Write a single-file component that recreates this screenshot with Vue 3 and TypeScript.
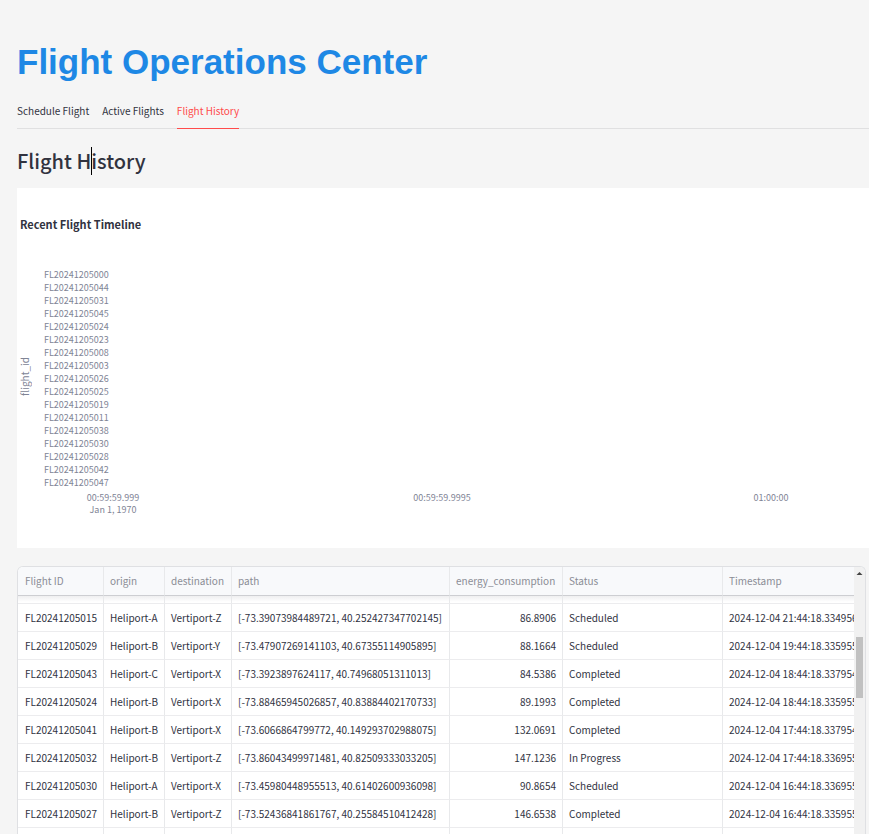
<script setup lang="ts">
import { ref } from 'vue'

interface FlightRow {
  id: string
  origin: string
  destination: string
  path: string
  energy: string
  status: string
  timestamp: string
}

const tabs: string[] = ['Schedule Flight', 'Active Flights', 'Flight History']
const activeTab = ref('Flight History')

const flightTicks: string[] = [
  '000', '044', '031', '045', '024', '023', '008', '003', '026',
  '025', '019', '011', '038', '030', '028', '042', '047',
].map((n) => `FL20241205${n}`)

const timeTicks: string[][] = [
  ['00:59:59.999', 'Jan 1, 1970'],
  ['00:59:59.9995'],
  ['01:00:00'],
]

const row = (
  id: string, origin: string, destination: string, path: string,
  energy: string, status: string, time: string,
): FlightRow => ({
  id: `FL20241205${id}`,
  origin: `Heliport-${origin}`,
  destination: `Vertiport-${destination}`,
  path: `[${path}]`,
  energy,
  status,
  timestamp: `2024-12-04 ${time}`,
})

const rows: FlightRow[] = [
  row('015', 'A', 'Z', '-73.39073984489721, 40.252427347702145', '86.8906', 'Scheduled', '21:44:18.334956'),
  row('029', 'B', 'Y', '-73.47907269141103, 40.67355114905895', '88.1664', 'Scheduled', '19:44:18.335955'),
  row('043', 'C', 'X', '-73.3923897624117, 40.74968051311013', '84.5386', 'Completed', '18:44:18.337954'),
  row('024', 'B', 'X', '-73.88465945026857, 40.83884402170733', '89.1993', 'Completed', '18:44:18.335955'),
  row('041', 'B', 'X', '-73.6066864799772, 40.149293702988075', '132.0691', 'Completed', '17:44:18.337954'),
  row('032', 'B', 'Z', '-73.86043499971481, 40.82509333033205', '147.1236', 'In Progress', '17:44:18.336955'),
  row('030', 'A', 'X', '-73.45980448955513, 40.61402600936098', '90.8654', 'Scheduled', '16:44:18.336955'),
  row('027', 'B', 'Z', '-73.52436841861767, 40.25584510412428', '146.6538', 'Completed', '16:44:18.335955'),
]
</script>

<template>
  <main class="page">
    <h1>Flight Operations Center</h1>

    <div class="tabs" role="tablist">
      <button
        v-for="tab in tabs"
        :key="tab"
        type="button"
        role="tab"
        class="tab"
        :class="{ active: tab === activeTab }"
        :aria-selected="tab === activeTab"
        @click="activeTab = tab"
      >{{ tab }}</button>
    </div>

    <h2>Flight H<span class="caret"></span>istory</h2>

    <section class="chart">
      <h3>Recent Flight Timeline</h3>
      <div class="plot">
        <span class="axis-title">flight_id</span>
        <ul class="y-axis">
          <li v-for="tick in flightTicks" :key="tick">{{ tick }}</li>
        </ul>
      </div>
      <div class="x-axis">
        <div v-for="tick in timeTicks" :key="tick[0]" class="x-tick">
          <div v-for="line in tick" :key="line">{{ line }}</div>
        </div>
      </div>
    </section>

    <section class="grid">
      <div class="viewport">
        <table>
          <colgroup>
            <col class="c-id" /><col class="c-origin" /><col class="c-dest" /><col class="c-path" />
            <col class="c-energy" /><col class="c-status" /><col />
          </colgroup>
          <thead>
            <tr>
              <th>Flight ID</th>
              <th>origin</th>
              <th>destination</th>
              <th>path</th>
              <th>energy_consumption</th>
              <th>Status</th>
              <th>Timestamp</th>
            </tr>
          </thead>
          <tbody>
            <tr class="partial" aria-hidden="true"><td v-for="n in 7" :key="n"></td></tr>
            <tr v-for="r in rows" :key="r.id">
              <td>{{ r.id }}</td>
              <td>{{ r.origin }}</td>
              <td>{{ r.destination }}</td>
              <td>{{ r.path }}</td>
              <td class="num">{{ r.energy }}</td>
              <td>{{ r.status }}</td>
              <td>{{ r.timestamp }}</td>
            </tr>
            <tr aria-hidden="true"><td v-for="n in 7" :key="n"></td></tr>
          </tbody>
        </table>
      </div>
      <div class="scrollbar">
        <svg viewBox="0 0 11 11" width="11" height="11" aria-hidden="true"><path d="M5.5 5 8.5 8h-6z" fill="#444" /></svg>
        <div class="thumb"></div>
      </div>
    </section>
  </main>
</template>

<style>
body {
  background: #f5f5f5;
}
</style>

<style scoped>
.page {
  box-sizing: border-box;
  display: flex;
  flex-direction: column;
  height: 100vh;
  overflow: hidden;
  padding: 40px 0 0 17px;
  color: #31333f;
  font-family: "Noto Sans CJK SC", "Open Sans", sans-serif;
}

h1,
h2,
h3 {
  margin: 0;
}

h1 {
  color: #1e88e5;
  font: bold 35px/44px "Liberation Sans", Arial, sans-serif;
}

.tabs {
  display: flex;
  flex-shrink: 0;
  gap: 13px;
  height: 32px;
  margin-top: 12px;
  border-bottom: 1px solid #e0e0e1;
}

.tab {
  height: 33px;
  padding: 0 0 4px;
  border: 0;
  border-bottom: 1px solid transparent;
  background: none;
  color: #31333f;
  font-family: inherit;
  font-size: 10px;
  white-space: nowrap;
}

.tab.active {
  border-color: #ff4b4b;
  color: #ff4b4b;
}

h2 {
  margin-top: 16px;
  font-size: 20px;
  font-weight: 500;
  line-height: 32px;
}

.caret {
  position: absolute;
  width: 1px;
  height: 28px;
  margin-top: 2px;
  background: #000;
}

.chart {
  box-sizing: border-box;
  flex-shrink: 0;
  height: 360px;
  margin-top: 11px;
  padding: 28px 0 0 3px;
  background: #fff;
  color: #808495;
}

h3 {
  color: #31333f;
  font-size: 11px;
  line-height: 16px;
}

.plot {
  display: flex;
  align-items: center;
  gap: 14px;
  height: 220px;
  margin-top: 36px;
}

.axis-title {
  width: 10px;
  padding-top: 4px;
  font-size: 10px;
  line-height: 10px;
  writing-mode: vertical-rl;
  transform: rotate(180deg);
}

.y-axis {
  display: grid;
  grid-auto-rows: 1fr;
  height: 100%;
  margin: 0;
  padding: 0;
  font-size: 9px;
  line-height: 13px;
  list-style: none;
}

.x-axis {
  display: flex;
  justify-content: space-between;
  margin: 4px 70px 0 65px;
  font-size: 9px;
  line-height: 12px;
}

.x-tick {
  display: flex;
  flex-direction: column;
  align-items: center;
  width: 56px;
  white-space: nowrap;
}

.grid {
  display: flex;
  flex: 1;
  min-height: 0;
  margin: 18px 3px 0 0;
  border: 1px solid #dfe0e3;
  border-bottom: 0;
  border-radius: 6px 6px 0 0;
  overflow: hidden;
  background: #fff;
}

.viewport {
  flex: 1;
  min-width: 0;
  overflow: hidden;
}

table {
  width: 100%;
  border-collapse: separate;
  border-spacing: 0;
  table-layout: fixed;
  font-size: 10px;
  line-height: 16px;
}

.c-id { width: 86px; }
.c-origin { width: 61px; }
.c-dest { width: 67px; }
.c-path { width: 218px; }
.c-energy { width: 113px; }
.c-status { width: 160px; }

th,
td {
  box-sizing: border-box;
  height: 28px;
  padding: 0 6px;
  border-right: 1px solid #e8e9eb;
  border-bottom: 1px solid #ececee;
  overflow: hidden;
  text-align: left;
  white-space: nowrap;
}

th:first-child,
td:first-child {
  padding-left: 7px;
}

th:last-child,
td:last-child {
  padding-right: 0;
  border-right: 0;
}

th {
  height: 29px;
  border-bottom-color: #cdced2;
  background: #f8f9fb;
  color: #8b8d96;
  font-weight: 400;
}

.partial td {
  height: 8px;
  padding: 0;
  background: linear-gradient(#efeff0, #fff 6px);
}

.num {
  text-align: right;
}

.scrollbar {
  display: flex;
  flex-direction: column;
  align-items: center;
  width: 11px;
  background: #f1f1f1;
}

.thumb {
  width: 7px;
  height: 61px;
  margin-top: 59px;
  background: #c1c1c1;
}
</style>
